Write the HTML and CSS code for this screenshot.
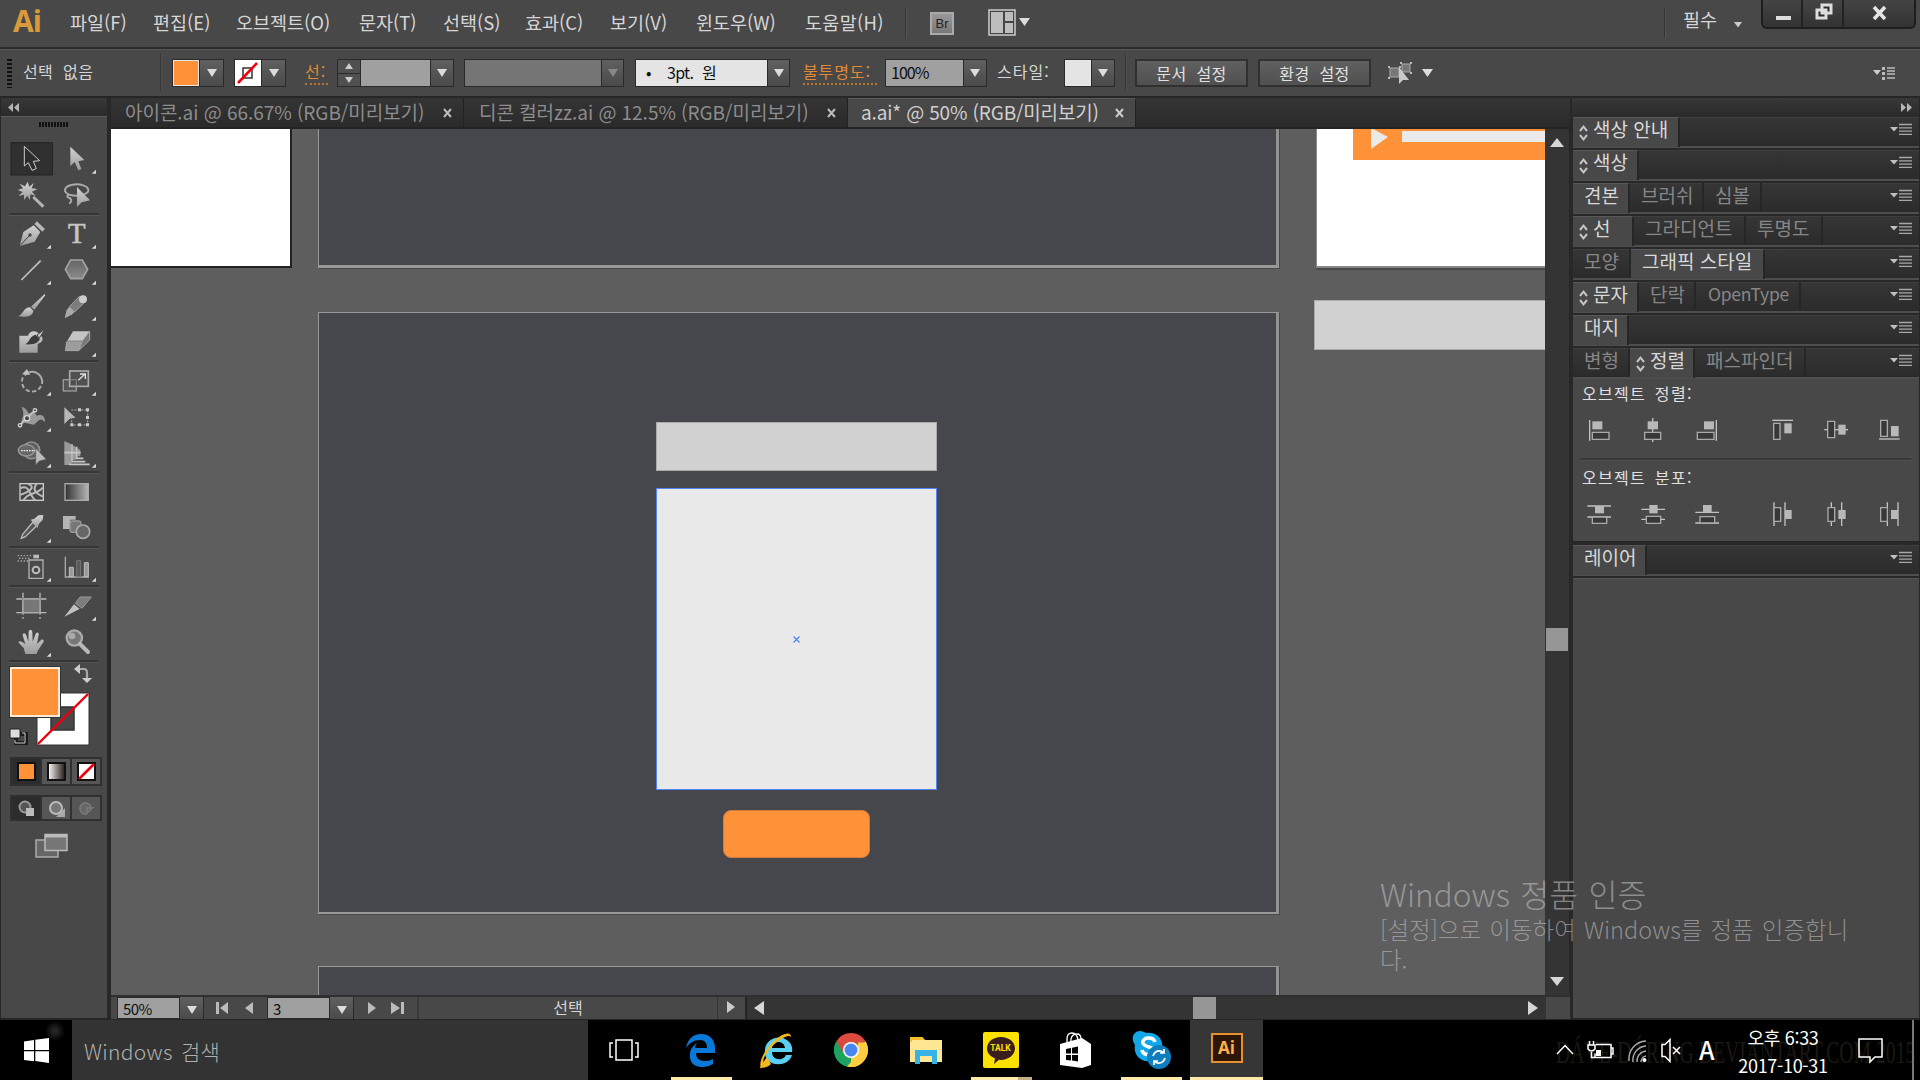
FILE: index.html
```html
<!DOCTYPE html>
<html lang="ko">
<head>
<meta charset="utf-8">
<title>a.ai</title>
<link rel="stylesheet" href="styles.css">
</head>
<body>
<svg width="0" height="0" class="defs">
  <defs>
    <linearGradient id="metal" x1="0" y1="0" x2="0" y2="1"><stop offset="0" stop-color="#d2d2d2"/><stop offset="1" stop-color="#9c9c9c"/></linearGradient>
    <linearGradient id="hex" x1="0" y1="0" x2="0" y2="1"><stop offset="0" stop-color="#666"/><stop offset="1" stop-color="#8a8a8a"/></linearGradient>
    <linearGradient id="ramp"><stop offset="0" stop-color="#333"/><stop offset="1" stop-color="#b5b5b5"/></linearGradient>
    <linearGradient id="rampw"><stop offset="0" stop-color="#fff"/><stop offset="1" stop-color="#231815"/></linearGradient>
    <symbol id="fly" viewBox="0 0 135 108"><path d="M126 86V98H113Z" fill="#d8d8d8"/></symbol>
    <symbol id="panelmenu" viewBox="0 0 22 13"><path d="M0 4h8l-4 4.500z" fill="#c0c0c0"/><path d="M9 1.500h13M9 4.800h13M9 8.100h13M9 11.400h13" stroke="#a8a8a8" stroke-width="1.300"/></symbol>
    <symbol id="updown" viewBox="0 0 9 16"><path d="M1 6l3.500-4.300L8 6M1 10l3.500 4.300L8 10" fill="none" stroke="#c4c4c4" stroke-width="2"/></symbol>
  </defs>
</svg>

<header class="menubar">
  <div class="logo">Ai</div>
  <nav class="menus">
    <span class="m1">파일(F)</span><span class="m2">편집(E)</span><span class="m3">오브젝트(O)</span><span class="m4">문자(T)</span><span class="m5">선택(S)</span><span class="m6">효과(C)</span><span class="m7">보기(V)</span><span class="m8">윈도우(W)</span><span class="m9">도움말(H)</span>
  </nav>
  <div class="vsep"></div>
  <div class="bridge">Br</div>
  <svg class="arrange" width="42" height="28" viewBox="0 0 42 28"><rect x="1" y="1" width="26" height="25" fill="#454545" stroke="#ccc" stroke-width="1.500"/><path d="M3 3h12v21H3zM17 3h8v9h-8zM17 14h8v10h-8z" fill="#bdbdbd"/><path d="M31 9h11l-5.500 8z" fill="#ddd"/></svg>
  <div class="vsep last"></div>
  <div class="workspace">필수</div>
  <svg class="wsarrow" width="8" height="6" viewBox="0 0 8 6"><path d="M0 0h8L4 5.500z" fill="#ccc"/></svg>
  <div class="winbtns">
    <div class="wb"><svg width="18" height="20"><path d="M2 15h15v4H2z" fill="#ddd"/></svg></div>
    <div class="wb"><svg width="20" height="20"><path d="M8 4h9v8H8zM3 9h9v8H3z" fill="#2a2a2a" stroke="#ddd" stroke-width="3"/></svg></div>
    <div class="wb close"><svg width="18" height="20"><path d="M3 3l11 12M14 3L3 15" stroke="#e4e4e4" stroke-width="3.600"/></svg></div>
  </div>
</header>

<section class="control">
  <div class="grip"></div>
  <div class="label none">선택 없음</div>
  <div class="vsep2"></div>
  <div class="combo fillc"><i class="sw orange"></i><b class="dd"></b></div>
  <div class="combo strokec"><i class="sw white"><svg width="25" height="26"><rect x="8" y="8" width="9" height="10" fill="none" stroke="#333" stroke-width="1.500"/><path d="M3 23L22 3" stroke="#f0000c" stroke-width="2.600"/></svg></i><b class="dd"></b></div>
  <div class="label link stroke">선:</div>
  <div class="combo weight"><i class="spin"><b class="up"></b><b class="dn"></b></i><i class="field"></i><b class="dd"></b></div>
  <div class="combo profile"><i class="field off"></i><b class="dd off"></b></div>
  <div class="combo brushc"><i class="field light"><em>•</em>3pt. 원</i><b class="dd"></b></div>
  <div class="label link opac">불투명도:</div>
  <div class="combo pct"><i class="field">100%</i><b class="dd"></b></div>
  <div class="label style">스타일:</div>
  <div class="combo stylec"><i class="sw pale"></i><b class="dd"></b></div>
  <div class="vsep2 s2"></div>
  <button class="btn">문서 설정</button>
  <button class="btn b2">환경 설정</button>
  <svg class="selsim" width="46" height="26" viewBox="0 0 46 26"><path d="M3 8h9v9H3zM15 4h8v8h-8z" fill="#777" stroke="#aaa"/><path d="M1 6h2v2H1zM12 6h2v2h-2zM1 17h2v2H1zM13 2h2v2h-2zM23 2h2v2h-2zM23 12h2v2h-2z" fill="#bbb"/><path d="M12 7v17l4-4 6 0z" fill="#c8c8c8"/><path d="M35 9h11l-5.500 8z" fill="#ddd"/></svg>
  <svg class="flyout" width="22" height="14" viewBox="0 0 22 14"><path d="M0 4h8l-4 5z" fill="#ccc"/><path d="M9 1h3v3H9zM9 6h3v3H9zM9 11h3v3H9z" fill="#bbb"/><path d="M14 2h8M14 5h8M14 8h8M14 12h8" stroke="#bbb" stroke-width="1.400"/></svg>
</section>

<main class="work">
  <aside class="toolbox">
    <div class="dockhead"><svg width="12" height="10"><path d="M5 0v9L0 4.500zM11 0v9L6 4.500z" fill="#b5b5b5"/></svg></div>
    <div class="tools">
      <div class="tgrip"></div>
      <div class="tgroup">
        <svg viewBox="0 0 135 108"><rect x="6" y="5" width="124" height="97" fill="#303030" stroke="#232323" stroke-width="3"/><path d="M46 16V75L58 65 69 88 82 83 73 61 92 59Z" fill="#2c2c2c" stroke="#ccc" stroke-width="3"/></svg>
        <svg viewBox="0 0 135 108"><path d="M49 17V75L62 63 73 88 82 84 73 61 91 57Z" fill="url(#metal)"/><use href="#fly"/></svg>
        <svg viewBox="0 0 135 108"><path d="M56 14l5 15 13-11-6 16 17 2-16 8 11 13-16-5-1 18-8-14-10 13 0-16-17 4 13-12-15-6 16-5-10-14 16 8z" fill="url(#metal)"/><path d="M73 60L103 89" stroke="#b4b4b4" stroke-width="9"/></svg>
        <svg viewBox="0 0 135 108"><path d="M46 53C26 45 30 29 52 24 78 18 104 27 103 41 101 53 70 60 50 54c-9-2-14 5-6 8 8 2 12 10 2 18" fill="none" stroke="#aaa" stroke-width="6"/><path d="M69 30V90L83 76 108 70Z" fill="url(#metal)"/></svg>
      </div>
      <hr>
      <div class="tgroup">
        <svg viewBox="0 0 135 108"><path d="M32 90L43 48 74 28 94 48 77 77Z" fill="url(#metal)"/><path d="M34 88L61 59" stroke="#444" stroke-width="3"/><circle cx="63" cy="57" r="5" fill="#444"/><path d="M80 20L104 43" stroke="#b8b8b8" stroke-width="11"/><use href="#fly"/></svg>
        <svg viewBox="0 0 135 108"><text x="68" y="82" class="typeicon">T</text><use href="#fly"/></svg>
        <svg viewBox="0 0 135 108"><path d="M37 84L95 26" stroke="#c0c0c0" stroke-width="5"/><use href="#fly"/></svg>
        <svg viewBox="0 0 135 108"><path d="M34 52L50 24H85L101 52 85 80H50Z" fill="url(#hex)" stroke="#a4a4a4" stroke-width="5"/><use href="#fly"/></svg>
        <svg viewBox="0 0 135 108"><path d="M107 18L66 56l10 9 33-43z" fill="url(#metal)"/><path d="M63 58l10 10c-3 20-26 20-46 17 14-3 16-27 36-27z" fill="url(#metal)"/></svg>
        <svg viewBox="0 0 135 108"><path d="M32 91L38 66 51 81Z M38 66L46 56 62 71 52 82Z" fill="#aaa"/><path d="M46 56L76 25 93 42 62 72Z" fill="#7c7c7c" stroke="#a0a0a0" stroke-width="3"/><circle cx="87" cy="34" r="12" fill="#ccc"/><use href="#fly"/></svg>
        <svg viewBox="0 0 135 108"><path d="M31 35H57C62 18 82 19 87 27L96 35C105 44 101 56 86 59V86H31Z" fill="url(#metal)"/><path d="M80 32l13 13C85 61 66 62 48 61c14-5 14-26 32-29z" fill="#3c3c3c"/><path d="M108 15L84 33 91 42Z" fill="#ccc" stroke="#444" stroke-width="3"/></svg>
        <svg viewBox="0 0 135 108"><path d="M57 22H107L86 50H40Z" fill="#c4c4c4"/><path d="M38 53H82L72 80H34Z" fill="#9c9c9c" stroke="#bbb" stroke-width="2"/><path d="M86 50L107 22V48L74 80Z" fill="#767676" stroke="#aaa" stroke-width="3"/><use href="#fly"/></svg>
      </div>
      <hr>
      <div class="tgroup">
        <svg viewBox="0 0 135 108"><path d="M47 37A30 30 0 0 1 99 63" fill="none" stroke="#aaa" stroke-width="6"/><path d="M96 69A30 30 0 0 1 42 42" fill="none" stroke="#aaa" stroke-width="6" stroke-dasharray="13 7"/><path d="M39 34L54 18 63 36Z" fill="#c0c0c0"/><use href="#fly"/></svg>
        <svg viewBox="0 0 135 108"><rect x="28" y="50" width="39" height="34" fill="#555" stroke="#999" stroke-width="4"/><rect x="47" y="24" width="56" height="46" fill="#505050" stroke="#aaa" stroke-width="5"/><path d="M47 50H67V69" fill="none" stroke="#888" stroke-width="3"/><path d="M73 52L93 33M78 33H94V48" fill="none" stroke="#ddd" stroke-width="4"/><use href="#fly"/></svg>
        <svg viewBox="0 0 135 108"><path d="M38 24C58 28 55 48 64 42 73 34 74 35 83 50 98 45 108 49 108 70 93 52 89 66 75 77 56 76 47 65 38 79 34 52 51 57 38 24Z" fill="#999"/><path d="M32 78L78 34" stroke="#ccc" stroke-width="4"/><g fill="#444" stroke="#d4d4d4" stroke-width="4"><circle cx="33" cy="79" r="5"/><circle cx="54" cy="58" r="8"/><circle cx="78" cy="34" r="5"/></g><use href="#fly"/></svg>
        <svg viewBox="0 0 135 108"><path d="M31 25L65 56 49 58 31 75Z" fill="#b8b8b8"/><path d="M52 33H101V78H53V54" fill="none" stroke="#aaa" stroke-width="3" stroke-dasharray="6 4"/><path d="M72 28h9v9h-9zM96 28h9v9h-9zM96 51h9v9h-9zM96 73h9v9h-9zM72 73h9v9h-9zM49 73h9v9h-9z" fill="#ccc"/></svg>
        <svg viewBox="0 0 135 108"><circle cx="67" cy="46" r="25" fill="#606060" stroke="#909090" stroke-width="5"/><ellipse cx="52" cy="46" rx="24" ry="17" fill="#666" stroke="#999" stroke-width="4"/><path d="M36 47H81" stroke="#eee" stroke-width="4" stroke-dasharray="5 3"/><path d="M80 39V90L91 78 112 73Z" fill="#bbb" stroke="#555" stroke-width="2"/><use href="#fly"/></svg>
        <svg viewBox="0 0 135 108"><path d="M31 18L52 28V90H31Z M56 31L66 37V74H56Z M70 39L79 45V64H70Z" fill="#999"/><path d="M31 53H80M54 28V80H94M68 35V70H88M45 88H107" fill="none" stroke="#c5c5c5" stroke-width="5"/><use href="#fly"/></svg>
      </div>
      <hr>
      <div class="tgroup">
        <svg viewBox="0 0 135 108"><rect x="33" y="29" width="70" height="50" fill="#444" stroke="#ccc" stroke-width="4"/><path d="M34 43C63 28 62 70 80 79M57 30C84 38 58 55 34 62M83 29C69 48 80 57 102 68M43 79C61 50 82 65 101 41" fill="none" stroke="#bbb" stroke-width="6"/></svg>
        <svg viewBox="0 0 135 108"><rect x="33" y="29" width="70" height="50" fill="url(#ramp)" stroke="#aaa" stroke-width="4"/></svg>
        <svg viewBox="0 0 135 108"><path d="M72 36L83 47 49 80 37 85 41 73Z" fill="#555" stroke="#bbb" stroke-width="4"/><path d="M65 29l11-3 12-10 15-1-2 15-11 11-5 14z" fill="url(#metal)"/><use href="#fly"/></svg>
        <svg viewBox="0 0 135 108"><path d="M27 18H65V29H49V57H27Z" fill="#b4b4b4"/><rect x="48" y="33" width="33" height="34" rx="8" fill="#777" stroke="#999" stroke-width="4"/><circle cx="87" cy="65" r="20" fill="#666" stroke="#aaa" stroke-width="5"/></svg>
      </div>
      <hr>
      <div class="tgroup">
        <svg viewBox="0 0 135 108"><path d="M60 33H102V88H60Z" fill="#4a4a4a" stroke="#b0b0b0" stroke-width="4"/><path d="M73 17H90V28H73Z" fill="#bbb"/><circle cx="81" cy="63" r="10" fill="#444" stroke="#bbb" stroke-width="6"/><path d="M26 20H70M26 36H58M30 28H66" stroke="#aaa" stroke-width="4" stroke-dasharray="4 5"/><use href="#fly"/></svg>
        <svg viewBox="0 0 135 108"><path d="M34 23V84H105" fill="none" stroke="#aaa" stroke-width="4"/><path d="M46 55h12v28H46zM91 41h12v42H91z" fill="#999" stroke="#c0c0c0" stroke-width="3"/><path d="M68 35h12v48H68z" fill="#5a5a5a" stroke="#777" stroke-width="3"/><use href="#fly"/></svg>
      </div>
      <hr>
      <div class="tgroup">
        <svg viewBox="0 0 135 108"><path d="M42 14V92M93 14V92M22 33H113M22 74H113" stroke="#bbb" stroke-width="4" stroke-dasharray="17 7 42 7"/><rect x="42" y="33" width="51" height="41" fill="#777" stroke="#aaa" stroke-width="4"/></svg>
        <svg viewBox="0 0 135 108"><path d="M31 86L60 49 77 63Z" fill="#c0c0c0"/><path d="M64 46L78 27H112L84 61Z" fill="#7c7c7c" stroke="#999" stroke-width="3"/><use href="#fly"/></svg>
        <svg viewBox="0 0 135 108"><path d="M49 90L44 72 29 56C28 48 39 52 49 61L41 34c0-8 8-8 11 0l6 19L59 24c1-8 10-8 11 0l1 29 9-24c4-6 11-3 9 4L84 60 97 47c7-3 9 4 5 9L86 81 83 90Z" fill="url(#metal)"/><use href="#fly"/></svg>
        <svg viewBox="0 0 135 108"><circle cx="61" cy="42" r="23" fill="#777" stroke="#aaa" stroke-width="7"/><circle cx="54" cy="36" r="10" fill="#aaa"/><path d="M78 60L102 84" stroke="#b8b8b8" stroke-width="12" stroke-linecap="round"/></svg>
      </div>
      <hr>
      <svg class="fillstroke" width="98" height="84" viewBox="0 0 98 84"><path d="M29 31H81V83H29Z" fill="#fff" stroke="#333" stroke-width="1"/><path d="M43 45H66V68H43Z" fill="#484848" stroke="#333" stroke-width="1.500"/><path d="M30 82L80 32" stroke="#f0000c" stroke-width="2.400"/><rect x="1.500" y="4.500" width="51" height="51" fill="#ff9138" stroke="#333"/><rect x="3" y="6" width="48" height="48" fill="#ff9138" stroke="#fff" stroke-width="1.600"/><path d="M67 7h9q3 0 3 4v7" fill="none" stroke="#aaa" stroke-width="2.200"/><path d="M66 7l6-5v10zM74 16h10l-5 5z" fill="#ccc"/><path d="M8 72h10v9H8z" fill="none" stroke="#1b1b1b" stroke-width="4"/><path d="M2 67h10v9H2z" fill="#ddd" stroke="#222" stroke-width="1"/><path d="M14 71h3v10H7v-3" fill="none" stroke="#ccc"/></svg>
      <div class="modes">
        <div class="on"><i class="orange"></i></div><div><svg width="19" height="19"><rect x="1" y="1" width="17" height="17" fill="url(#rampw)" stroke="#111" stroke-width="2"/></svg></div><div><svg width="19" height="19"><rect x="1" y="1" width="17" height="17" fill="#fff" stroke="#111" stroke-width="2"/><path d="M2 17L17 2" stroke="#f0000c" stroke-width="2.600"/></svg></div>
      </div>
      <div class="modes draw">
        <div class="on"><svg width="18" height="18"><circle cx="7" cy="7" r="5.500" fill="#555" stroke="#999" stroke-width="2"/><rect x="8" y="8" width="8" height="8" fill="#bbb"/></svg></div><div><svg width="18" height="18"><path d="M8 17h9V8z" fill="#aaa"/><circle cx="8" cy="8" r="6" fill="#777" stroke="#bbb" stroke-width="2"/></svg></div><div><svg width="18" height="18"><path d="M13 8a5.500 5.500 0 1 0-5 6M9 8h5l-5 5z" fill="#666" stroke="#777" stroke-width="2"/></svg></div>
      </div>
      <svg class="screens" width="34" height="26"><path d="M1 7h22v17H1z" fill="#666" stroke="#aaa" stroke-width="1.500"/><path d="M10 1.500h22v16H10z" fill="#777" stroke="#bbb" stroke-width="1.500"/><path d="M10 3h22" stroke="#bbb" stroke-width="3"/></svg>
    </div>
  </aside>

  <section class="docs">
    <div class="tabs">
      <div class="tab t1"><span>아이콘.ai @ 66.67% (RGB/미리보기)</span><svg width="10" height="10"><path d="M1 1l7 8M8 1L1 9" stroke="#bbb" stroke-width="2"/></svg></div>
      <div class="tab t2"><span>디콘 컬러zz.ai @ 12.5% (RGB/미리보기)</span><svg width="10" height="10"><path d="M1 1l7 8M8 1L1 9" stroke="#bbb" stroke-width="2"/></svg></div>
      <div class="tab t3 active"><span>a.ai* @ 50% (RGB/미리보기)</span><svg width="10" height="10"><path d="M1 1l7 8M8 1L1 9" stroke="#ccc" stroke-width="2"/></svg></div>
    </div>
    <div class="view">
      <div class="canvas">
        <div class="obj a1"></div>
        <div class="obj board a2"></div>
        <div class="obj a3"></div>
        <div class="obj player"><svg width="193" height="32"><path d="M18 0h2l15 8-17 12z" fill="#eaeaea"/><path d="M49 2h144v11H49z" fill="#eaeaea"/></svg></div>
        <div class="obj bar side"></div>
        <div class="obj board a4"></div>
        <div class="obj board a5"></div>
        <div class="obj bar mid"></div>
        <div class="obj selected"><svg width="7" height="7"><path d="M.5.500l6 6M6.500.500l-6 6" stroke="#4f80ff" stroke-width="1.200"/></svg></div>
        <div class="obj cta"></div>
      </div>
      <div class="vscroll"><svg width="14" height="9"><path d="M0 9h14L7 0z" fill="#d6d6d6"/></svg><i></i><svg width="14" height="9"><path d="M0 0h14L7 9z" fill="#d6d6d6"/></svg></div>
    </div>
    <div class="status">
      <div class="sfield">50%</div><b class="dd sd"></b>
      <svg class="nav" width="63" height="22"><path d="M12 5h3v12h-3zM24 5v12l-8-6zM49 5v12l-8-6z" fill="#bbb"/></svg>
      <div class="sfield">3</div><b class="dd sd"></b>
      <svg class="nav2" width="63" height="22"><path d="M14 5v12l8-6zM37 5v12l9-6zM47 5h3v12h-3z" fill="#bbb"/></svg>
      <div class="current">선택</div>
      <div class="play"><svg width="8" height="12"><path d="M0 0v12l8-6z" fill="#ccc"/></svg></div>
      <div class="hscroll"><svg width="10" height="14"><path d="M10 0v14L0 7z" fill="#d6d6d6"/></svg><i></i><svg width="10" height="14"><path d="M0 0v14l10-7z" fill="#d6d6d6"/></svg></div>
      <div class="corner"></div>
    </div>
  </section>

  <aside class="panels">
    <div class="dockhead right"><svg width="12" height="10"><path d="M1 0v9l5-4.500zM7 0v9l5-4.500z" fill="#b5b5b5"/></svg></div>
    <div class="prow"><div class="pt on ic w106"><svg><use href="#updown"/></svg>색상 안내</div><svg class="pm"><use href="#panelmenu"/></svg></div>
    <div class="prow"><div class="pt on ic w66"><svg><use href="#updown"/></svg>색상</div><svg class="pm"><use href="#panelmenu"/></svg></div>
    <div class="prow"><div class="pt on w57">견본</div><div class="pt w74">브러쉬</div><div class="pt w58">심볼</div><svg class="pm"><use href="#panelmenu"/></svg></div>
    <div class="prow"><div class="pt on ic w61"><svg><use href="#updown"/></svg>선</div><div class="pt w112">그라디언트</div><div class="pt w77">투명도</div><svg class="pm"><use href="#panelmenu"/></svg></div>
    <div class="prow"><div class="pt w58">모양</div><div class="pt on w134">그래픽 스타일</div><svg class="pm"><use href="#panelmenu"/></svg></div>
    <div class="prow"><div class="pt on ic w66"><svg><use href="#updown"/></svg>문자</div><div class="pt w57">단락</div><div class="pt w105 latin">OpenType</div><svg class="pm"><use href="#panelmenu"/></svg></div>
    <div class="prow"><div class="pt on w56">대지</div><svg class="pm"><use href="#panelmenu"/></svg></div>
    <div class="prow"><div class="pt w57">변형</div><div class="pt on ic w65"><svg><use href="#updown"/></svg>정렬</div><div class="pt w111">패스파인더</div><svg class="pm"><use href="#panelmenu"/></svg></div>
    <div class="align">
      <div class="alabel">오브젝트 정렬:</div>
      <div class="aicons">
        <svg viewBox="0 0 72 72"><path class="l" d="M8 6V68"/><path class="f" d="M16 10H46V34H16Z"/><path class="o" d="M16 43H66V64H16Z"/></svg>
        <svg viewBox="0 0 72 72"><path class="l" d="M35 0V72"/><path class="f" d="M20 10H51V34H20Z"/><path class="o" d="M11 43H59V64H11Z"/></svg>
        <svg viewBox="0 0 72 72"><path class="l" d="M64 6V68"/><path class="f" d="M27 10H57V34H27Z"/><path class="o" d="M7 43H57V64H7Z"/></svg>
        <svg class="gap" viewBox="0 0 72 72"><path class="l" d="M7 7H69"/><path class="o" d="M11 16H30V64H11Z"/><path class="f" d="M43 16H65V46H43Z"/></svg>
        <svg viewBox="0 0 72 72"><path class="l" d="M1 35H72"/><path class="o" d="M11 10H32V59H11Z"/><path class="f" d="M43 20H65V50H43Z"/></svg>
        <svg viewBox="0 0 72 72"><path class="l" d="M3 63H65"/><path class="o" d="M8 7H28V55H8Z"/><path class="f" d="M39 24H62V55H39Z"/></svg>
      </div>
      <hr>
      <div class="alabel">오브젝트 분포:</div>
      <div class="aicons">
        <svg viewBox="0 0 72 72"><path class="l" d="M1 12H72M1 45H72"/><path class="f" d="M24 12H51V34H24Z"/><path class="o" d="M16 45H59V64H16Z"/></svg>
        <svg viewBox="0 0 72 72"><path class="l" d="M1 22H72M1 52H72"/><path class="f" d="M25 9H50V34H25Z"/><path class="o" d="M16 43H59V64H16Z"/></svg>
        <svg viewBox="0 0 72 72"><path class="l" d="M1 31H72M1 63H72"/><path class="f" d="M24 9H50V31H24Z"/><path class="o" d="M15 44H59V63H15Z"/></svg>
        <svg class="gap" viewBox="0 0 72 72"><path class="l" d="M12 1V72M45 1V72"/><path class="o" d="M12 17H32V58H12Z"/><path class="f" d="M45 24H65V51H45Z"/></svg>
        <svg viewBox="0 0 72 72"><path class="l" d="M22 1V72M53 1V72"/><path class="o" d="M12 17H32V58H12Z"/><path class="f" d="M43 24H65V51H43Z"/></svg>
        <svg viewBox="0 0 72 72"><path class="l" d="M28 1V72M60 1V72"/><path class="o" d="M8 17H28V58H8Z"/><path class="f" d="M39 24H60V51H39Z"/></svg>
      </div>
    </div>
    <div class="prow layers"><div class="pt on w73">레이어</div><svg class="pm"><use href="#panelmenu"/></svg></div>
    <div class="layerbody"></div>
  </aside>
</main>

<footer class="taskbar">
  <div class="start"><svg width="25" height="25" viewBox="0 0 25 25"><path d="M0 3.500L10 2v10H0zM11.300 1.800L25 0v12H11.300zM0 13.300h10v10L0 22zM11.300 13.300H25V25l-13.700-2z" fill="#fff"/></svg></div>
  <div class="search">Windows 검색</div>
  <div class="apps">
    <div class="app"><svg width="32" height="22" viewBox="0 0 32 22"><path d="M8 1h16v20H8zM5 4H2v14h3M27 4h3v14h-3" fill="none" stroke="#fff" stroke-width="1.500"/></svg></div>
    <div class="app run"><svg width="32" height="34" viewBox="0 0 32 34"><path d="M1 15C3 5 9 1 16 1c9 0 14 6 14 14v5H11c0 6 4 8 9 8 4 0 6-1 8-2v5c-3 2-7 3-11 3C8 34 4 28 5 21c0-5 4-9 7-11-1 1-2 3-2 5h12c0-5-2-8-7-8C9 7 4 10 1 15z" fill="#0a78d7"/></svg></div>
    <div class="app"><svg width="38" height="38" viewBox="0 0 38 38"><path d="M35 21H15c0 9 12 9 14 3h6C32 36 10 37 8 23 6 8 21 4 28 8c6 3 8 8 7 13zM15 17h13c-1-8-12-8-13 0z" fill="#5ad0f5"/><path d="M10 26C-2 42 3 37 13 34 4 36 4 28 13 18 22 7 34 2 34 7c0 2-1 4-1 4 5-13-8-10-19 2C4 24 2 34 4 36c3 2 8-1 10-3" fill="#f5b81c"/></svg></div>
    <div class="app"><svg width="34" height="34" viewBox="0 0 34 34"><path d="M17 17L2.300 8.500A17 17 0 0 1 31.700 8.500z" fill="#dd4b3e"/><path d="M17 17L31.700 8.500A17 17 0 0 1 17 34z" fill="#ffcd42"/><path d="M17 17V34A17 17 0 0 1 2.300 8.500z" fill="#1da260"/><path d="M2.300 8.500L9.500 21 17 17zM17 9h15L31 8H17z" fill="#dd4b3e"/><path d="M2.300 8.500L10 21 17 25 13 33.500A17 17 0 0 1 2.300 8.500z" fill="#1da260"/><path d="M13 33.600L24 21V9.500H32A17 17 0 0 1 13 33.600z" fill="#ffcd42"/><circle cx="17" cy="17" r="8" fill="#fff"/><circle cx="17" cy="17" r="6.500" fill="#4a86f0"/></svg></div>
    <div class="app"><svg width="32" height="28" viewBox="0 0 32 28"><path d="M0 1h12l3 3h17v22H0z" fill="#ffe693"/><path d="M0 1h12l3 3H2v2H0z" fill="#f4bf2b"/><path d="M5 14h22v14h-5v-8H10v8H5z" fill="#35b3e6"/></svg></div>
    <div class="app run two"><div class="kakao"><svg width="28" height="28" viewBox="0 0 28 28"><path d="M14 0c8 0 14 5 14 11.500S21 23 14 23c-1 0-1 0-2-.200L7 27l1-5.500C3 19 0 16 0 11.500 0 5 6 0 14 0z" fill="#3a1d1d"/></svg><span>TALK</span></div></div>
    <div class="app"><svg width="34" height="37" viewBox="0 0 34 37"><path d="M1 12l22-6v30L1 33zM23 6l9 6v21l-9 3z" fill="#fff"/><path d="M8 13V7q0-6 5-6t6 7M12 11V7q1-5 6-5 4 0 4 5" fill="none" stroke="#fff" stroke-width="1.300"/><path d="M7 17l5-1v5.500H7zM13 15.700l6-1.200v7h-6zM7 23h5v5.500l-5-.500zM13 23h6v6.500l-6-1z" fill="#000"/></svg></div>
    <div class="app run"><svg width="40" height="40" viewBox="0 0 40 40"><path d="M9 1c3 0 4 1 6 2 10-2 18 6 16 16 3 7-4 15-11 12C10 33 2 25 4 15-1 8 3 1 9 1z" fill="#11a7e9"/><path d="M24 12c-2-6-13-5-12 1 1 5 11 3 11 8 0 5-11 5-12-1" fill="none" stroke="#fff" stroke-width="3.600"/><circle cx="28" cy="27" r="12" fill="#0f7fc0"/><path d="M22 26q2-6 8-5l3 2M34 28q-2 6-8 5l-3-2M33 19v4h-4M23 35v-4h4" fill="none" stroke="#fff" stroke-width="1.700"/></svg></div>
    <div class="app run current-app"><div class="aiapp">Ai</div></div>
  </div>
  <div class="credit">DÁVE-DÁRING.DEVIANTART.COM 2015</div>
  <div class="tray">
    <svg width="132" height="32" viewBox="0 0 132 32"><g fill="none" stroke="#fff" stroke-width="1.500"><path d="M2 20l8-8.500 8 8.500M41 10.500h15v13H40v-4M56 14h2v6h-2M34.500 7v4M38.500 7v4M33 11h7v4q-3.500 4-7 0zM36.500 18v5.500h4M107 10.500h3l5-5v22l-5-5h-3z"/><path d="M118 13l7 7M125 13l-7 7"/></g><path d="M41 22v-6h5v6z" fill="#fff"/><g fill="none" stroke="#aaa" stroke-width="1.400"><path d="M74 27A18 18 0 0 1 91 7" /><path d="M78 28A14 14 0 0 1 91 12"/><path d="M82 28a10 10 0 0 1 9-11"/><path d="M86 28a6 6 0 0 1 5-6"/></g><circle cx="89.500" cy="26" r="2" fill="#fff"/></svg>
    <div class="ime">A</div>
    <div class="clock"><span>오후 6:33</span><span>2017-10-31</span></div>
    <svg class="note" width="26" height="26" viewBox="0 0 26 26"><path d="M1 1h23v18h-7l-5 5v-5H1z" fill="none" stroke="#fff" stroke-width="1.500"/></svg>
    <div class="peek"></div>
  </div>
</footer>

<div class="activate"><h1>Windows 정품 인증</h1><p>[설정]으로 이동하여 Windows를 정품 인증합니<br>다.</p></div>
</body>
</html>
```
FILE: styles.css
```css
* { box-sizing: border-box; }
body { margin: 0; width: 1920px; height: 1080px; overflow: hidden; background: #484848; color: #d6d6d6; font: 19px/24px "Noto Sans CJK KR", "Noto Sans", sans-serif; font-weight: 400; display: flex; flex-direction: column; position: relative; }
svg { display: block; flex: none; }
.defs { position: absolute; }
i, em { font-style: normal; }
.orange { background: #ff9138; }

.menubar { height: 49px; flex: none; display: flex; align-items: flex-start; border-bottom: 2px solid #2c2c2c; white-space: nowrap; }
.logo { width: 70px; padding-left: 13px; font: bold 30px/42px "Open Sans", sans-serif; letter-spacing: -1px; color: #d99a3c; }
.menus { display: flex; width: 835px; padding-top: 10px; font-size: 18.500px; }
.menus span { flex: none; }
.m1 { width: 83px; } .m2 { width: 83px; } .m3 { width: 123px; } .m4 { width: 84px; } .m5 { width: 82px; } .m6 { width: 85px; } .m7 { width: 86px; } .m8 { width: 109px; } .m9 { width: 90px; letter-spacing: .3px; }
.vsep { width: 2px; height: 30px; margin-top: 8px; background: #343434; border-right: 1px solid #545454; }
.bridge { width: 24px; height: 23px; margin: 12px 0 0 23px; background: linear-gradient(#999, #777); border: 2px solid #aaa; color: #222; font: 500 13px/19px "Liberation Sans", sans-serif; text-align: center; }
.arrange { margin: 9px 0 0 34px; }
.vsep.last { margin-left: 634px; }
.workspace { margin: 7px 0 0 17px; width: 51px; font-size: 18.500px; }
.wsarrow { margin-top: 22px; }
.winbtns { margin-left: 19px; display: flex; border: 2px solid #1e1e1e; border-top: 0; border-radius: 0 0 6px 6px; background: linear-gradient(#444, #333); height: 29px; width: 155px; }
.wb { width: 41px; padding: 1px 0 0 11px; border-right: 2px solid #222; }
.wb.close { width: 71px; padding: 4px 0 0 27px; border: 0; }

.control { height: 49px; flex: none; display: flex; align-items: flex-start; padding: 9px 0 0 7px; border-top: 1px solid #565656; border-bottom: 2px solid #262626; white-space: nowrap; }
.grip { width: 5px; height: 29px; background: repeating-linear-gradient(#111 0 2px, transparent 2px 4px); }
.label { font-size: 16px; line-height: 25px; }
.none { margin-left: 11px; width: 137px; word-spacing: 5px; letter-spacing: .4px; }
.vsep2 { width: 2px; height: 37px; margin-top: -5px; background: #363636; border-right: 1px solid #505050; }
.combo { display: flex; height: 28px; border: 1px solid #2a2a2a; background: #2a2a2a; gap: 1px; }
.fillc { margin-left: 10px; width: 52px; }
.strokec { margin-left: 10px; width: 52px; }
.sw { width: 26px; border: 1px solid #e6e6e6; }
.sw.white { background: #fff; border: 0; }
.sw.pale { background: #e4e4e4; }
.dd { flex: 1; display: flex; align-items: center; justify-content: center; background: linear-gradient(#606060, #4a4a4a); }
.dd::after { content: ""; border: 5px solid transparent; border-top: 8px solid #dcdcdc; border-bottom: 0; }
.dd.off::after { border-top-color: #888; }
.link { color: #e08a34; border-bottom: 2px dotted #b87430; line-height: 24px; }
.stroke { margin-left: 19px; width: 23px; letter-spacing: 1px; }
.weight { margin-left: 9px; width: 117px; }
.spin { width: 22px; display: flex; flex-direction: column; gap: 1px; }
.spin b { flex: 1; display: flex; align-items: center; justify-content: center; background: #505050; }
.up::after { content: ""; border: 4px solid transparent; border-bottom: 6px solid #ccc; border-top: 0; }
.dn::after { content: ""; border: 4px solid transparent; border-top: 6px solid #ccc; border-bottom: 0; }
.field { width: 69px; background: #a0a0a0; color: #111; font: 16px/24px "Noto Sans CJK KR", sans-serif; padding-left: 5px; letter-spacing: -1px; }
.profile { margin-left: 10px; width: 160px; }
.profile .field { width: 136px; }
.field.off { background: #757575; }
.brushc { margin-left: 11px; width: 155px; }
.brushc .field { width: 131px; background: #e4e4e4; word-spacing: 5px; letter-spacing: -.7px; }
.brushc em { display: inline-block; margin: 0 15px 0 5px; width: 6px; }
.opac { margin-left: 13px; width: 74px; letter-spacing: .9px; }
.pct { margin-left: 8px; width: 102px; }
.pct .field { width: 77px; }
.label.style { margin-left: 10px; width: 67px; letter-spacing: 1px; }
.stylec { width: 51px; }
.s2 { margin-left: 10px; }
.btn { margin-left: 8px; width: 113px; height: 28px; padding: 0; border: 2px solid #303030; background: linear-gradient(#606060, #505050); color: #e2e2e2; font: 16px/22px "Noto Sans CJK KR", sans-serif; word-spacing: 5px; letter-spacing: .4px; }
.b2 { margin-left: 10px; }
.selsim { margin: 1px 0 0 16px; }
.flyout { margin: 7px 0 0 440px; }

.work { flex: 1; min-height: 0; display: flex; background: #282828; border-bottom: 2px solid #262626; }
.toolbox { width: 106px; margin: 0 4px 0 1px; display: flex; flex-direction: column; }
.dockhead { height: 18px; flex: none; padding: 5px 0 0 7px; background: linear-gradient(#383838, #2a2a2a); }
.tools { flex: 1; background: #484848; border-top: 1px solid #5c5c5c; padding: 5px 8px 0; display: flex; flex-direction: column; }
.tgrip { flex: none; width: 29px; height: 5px; margin: 0 0 14px 30px; background: repeating-linear-gradient(90deg, #111 0 2px, transparent 2px 3px); }
.tgroup { display: grid; grid-template-columns: 45px 45px; grid-auto-rows: 36px; }
.tgroup svg { width: 45px; height: 36px; }
.tools hr { width: 90px; height: 3px; flex: none; margin: 0; border: 0; border-top: 2px solid #363636; border-bottom: 1px solid #555; }
.typeicon { font: 86px "Liberation Serif", serif; fill: #c4c4c4; stroke: #c4c4c4; stroke-width: 2px; text-anchor: middle; }
.fillstroke { margin: -1px 0 1px -1px; }
.modes { display: flex; width: 92px; height: 29px; margin: 10px 0 0 1px; border: 2px solid #303030; gap: 2px; background: #303030; }
.modes div { flex: 1; display: flex; align-items: center; justify-content: center; background: #565656; }
.modes .on { background: #2c2c2c; }
.modes i { width: 19px; height: 19px; border: 2px solid #111; }
.modes.draw { height: 26px; margin-top: 9px; }
.draw svg { position: relative; left: 1px; top: 1px; }
.screens { margin: 12px 0 0 26px; }

.docs { width: 1459px; display: flex; flex-direction: column; }
.tabs { height: 31px; flex: none; display: flex; background: linear-gradient(#353535, #2a2a2a); border-bottom: 2px solid #242424; white-space: nowrap; }
.tab { display: flex; justify-content: space-between; padding: 2px 10px 0 14px; border-right: 1px solid #222; color: #8c8c8c; letter-spacing: -.04px; }
.tab svg { margin-top: 8px; }
.t1 { width: 353px; } .t2 { width: 384px; padding-left: 15px; } .t3 { width: 288px; padding-left: 13px; }
.tab.active { background: #484848; color: #d0d0d0; border-top: 1px solid #5a5a5a; padding-top: 1px; }
.t3 span { letter-spacing: -.15px; }
.view { height: 866px; flex: none; display: flex; }
.canvas { position: relative; width: 1434px; overflow: hidden; background: #5e5e5e; }
.obj { position: absolute; }
.a1 { left: 0; top: 0; width: 181px; height: 139px; background: #fff; border: 1px solid #222; border-width: 0 2px 2px 0; }
.board { left: 207px; width: 961px; background: #46474c; border: 1px solid #999; border-right-width: 3px; border-right-color: #929292; box-shadow: 1px 1px 0 #484848; }
.a2 { top: -20px; height: 159px; border-bottom-width: 3px; }
.a3 { left: 1205px; top: 0; width: 229px; height: 139px; background: #fff; border-left: 1px solid #888; border-bottom: 2px solid #888; box-shadow: 0 2px 0 #4a4a4a; }
.player { left: 1242px; top: 0; width: 193px; height: 31px; background: #ff9138; overflow: hidden; }
.bar { background: #d1d1d1; border: 1px solid #aaa; }
.side { left: 1203px; top: 171px; width: 240px; height: 50px; }
.a4 { top: 183px; height: 602px; border-bottom-width: 2px; }
.a5 { top: 837px; height: 50px; }
.mid { left: 545px; top: 293px; width: 281px; height: 49px; }
.selected { left: 545px; top: 359px; width: 281px; height: 302px; background: #e9e9e9; border: 1px solid #5384f5; display: flex; align-items: center; justify-content: center; }
.cta { left: 612px; top: 681px; width: 147px; height: 48px; border-radius: 8px; background: #ff9138; border: 1px solid #d17c3a; }
.vscroll { width: 25px; display: flex; flex-direction: column; align-items: center; padding: 9px 1px 9px 0; background: #343434; border-right: 1px solid #262626; }
.vscroll i { width: 22px; height: 23px; margin: 481px 0 326px; background: #969696; }
.status { height: 24px; flex: none; display: flex; align-items: stretch; padding-left: 6px; background: #484848; border-top: 2px solid #303030; }
.sfield { width: 63px; background: #a0a0a0; border: 1px solid #2a2a2a; color: #111; font-size: 15px; line-height: 22px; padding-left: 5px; letter-spacing: -.6px; }
.sd { flex: none; width: 24px; border-right: 1px solid #2a2a2a; padding-top: 4px; }
.nav { margin: 0; }
.nav2 { margin: 0; }
.current { width: 300px; border-left: 2px solid #3a3a3a; text-align: center; font-size: 16px; line-height: 20px; }
.play { width: 28px; border-left: 1px solid #353535; padding: 4px 0 0 9px; }
.hscroll { width: 801px; display: flex; align-items: center; padding: 0 8px 0 7px; background: #343434; border-left: 2px solid #242424; }
.hscroll i { width: 23px; height: 22px; background: #969696; margin: 0 312px 0 429px; }
.corner { width: 24px; background: #484848; }

.panels { width: 348px; margin-left: 2px; display: flex; flex-direction: column; border-right: 1px solid #262626; }
.dockhead.right { padding-left: 328px; height: 19px; }
.prow { height: 31px; flex: none; margin: 0 0 2px 1px; display: flex; background: linear-gradient(#363636, #2b2b2b); border-bottom: 2px solid #4e4e4e; box-shadow: inset 0 1px 0 #3e3e3e; white-space: nowrap; }
.pt { padding: 0 0 0 11px; line-height: 23px; height: 28px; color: #868686; border-right: 2px solid #262626; display: flex; }
.pt.on { height: 30px; background: #484848; color: #d8d8d8; border-top: 1px solid #585858; line-height: 21px; }
.pt.ic { padding-left: 6px; }
.pt svg { width: 9px; height: 16px; margin: 7px 5px 0 0; }
.pt.latin { font-size: 17.500px; padding-left: 12px; letter-spacing: -.3px; }
.pm { width: 22px; height: 13px; margin: 6px 7px 0 auto; }
.w56 { width: 56px; } .w57 { width: 57px; } .w58 { width: 58px; } .w61 { width: 61px; } .w65 { width: 65px; } .w66 { width: 66px; } .w73 { width: 74px; } .w74 { width: 74px; } .w77 { width: 77px; } .w105 { width: 105px; } .w106 { width: 107px; } .w111 { width: 111px; } .w112 { width: 112px; } .w134 { width: 134px; }
.align { height: 162px; flex: none; margin: -2px 0 4px 1px; background: #484848; padding: 0 0 0 9px; }
.alabel { height: 29px; font-size: 16px; letter-spacing: 1.300px; word-spacing: 3px; line-height: 28px; color: #e0e0e0; }
.aicons { display: flex; gap: 30px; margin: 10px 0 0 5px; }
.aicons svg { width: 24px; height: 24px; }
.aicons .gap { margin-left: 21px; }
.l { stroke: #c2c2c2; stroke-width: 4; fill: none; }
.f { fill: #b8b8b8; }
.o { fill: #383838; stroke: #aaa; stroke-width: 4; }
.align hr { margin: 16px 8px 2px -2px; border: 0; border-top: 2px solid #383838; border-bottom: 1px solid #505050; }
.layerbody { flex: 1; margin: 0 0 0 1px; background: #484848; border-top: 1px solid #565656; }

.taskbar { height: 60px; flex: none; display: flex; position: relative; background: #000; color: #fff; }
.start { width: 72px; padding: 18px 0 0 24px; background: radial-gradient(circle at 55px 11px, #252525 0 2px, transparent 10px); }
.search { width: 516px; background: #333; color: #b0b0b0; padding-left: 12px; font-size: 21px; line-height: 62px; font-weight: 300; letter-spacing: .3px; word-spacing: 2px; }
.apps { display: flex; margin-left: -1px; }
.app { width: 75px; height: 60px; display: flex; align-items: center; justify-content: center; position: relative; }
.app:first-child { width: 76px; padding-right: 2px; }
.app.run::after { content: ""; position: absolute; left: 8px; bottom: 0; width: 61px; height: 3px; background: #ffe9a8; }
.app.two::after { background: linear-gradient(90deg, #ffe9a8 47px, #c0b083 47px); }
.app.current-app { width: 73px; background: #363636; margin-left: 2px; }
.app.current-app::after { left: 0; width: 73px; }
.kakao { width: 36px; height: 36px; border-radius: 2px; background: #fae100; position: relative; padding: 5px 0 0 4px; }
.kakao span { position: absolute; left: 0; width: 36px; top: 10px; text-align: center; font: bold 8.500px/12px "Roboto", sans-serif; color: #fae100; }
.aiapp { width: 32px; height: 30px; margin-bottom: 5px; background: #2c1708; border: 2px solid #e8902a; color: #ffb04a; font: bold 17px/26px "Open Sans", sans-serif; text-align: center; }
.credit { position: absolute; left: 1556px; top: 16px; width: 362px; height: 34px; font: 31px/34px "Liberation Serif", serif; color: #1c1911; white-space: nowrap; transform: scaleX(.635); transform-origin: 0 0; }
.tray { margin-left: auto; display: flex; position: relative; }
.tray > svg:first-child { margin: 14px 0 0; }
.ime { margin: 14px 0 0 12px; width: 19px; font: 500 25px/30px "Noto Sans CJK KR", sans-serif; }
.clock { width: 110px; margin: 3px 0 0 10px; display: flex; flex-direction: column; text-align: center; font-size: 18px; line-height: 28px; letter-spacing: -.3px; }
.note { margin: 18px 0 0 20px; }
.peek { width: 8px; margin-left: 28px; border-left: 2px solid #777; }

.activate { position: absolute; left: 1380px; top: 872px; width: 480px; color: rgba(190, 190, 190, .6); font-weight: 300; white-space: nowrap; word-spacing: 1.500px; }
.activate h1 { margin: 0; font-size: 31.500px; line-height: 42px; font-weight: 300; }
.activate p { margin: 0; font-size: 23.500px; line-height: 30px; }
```
